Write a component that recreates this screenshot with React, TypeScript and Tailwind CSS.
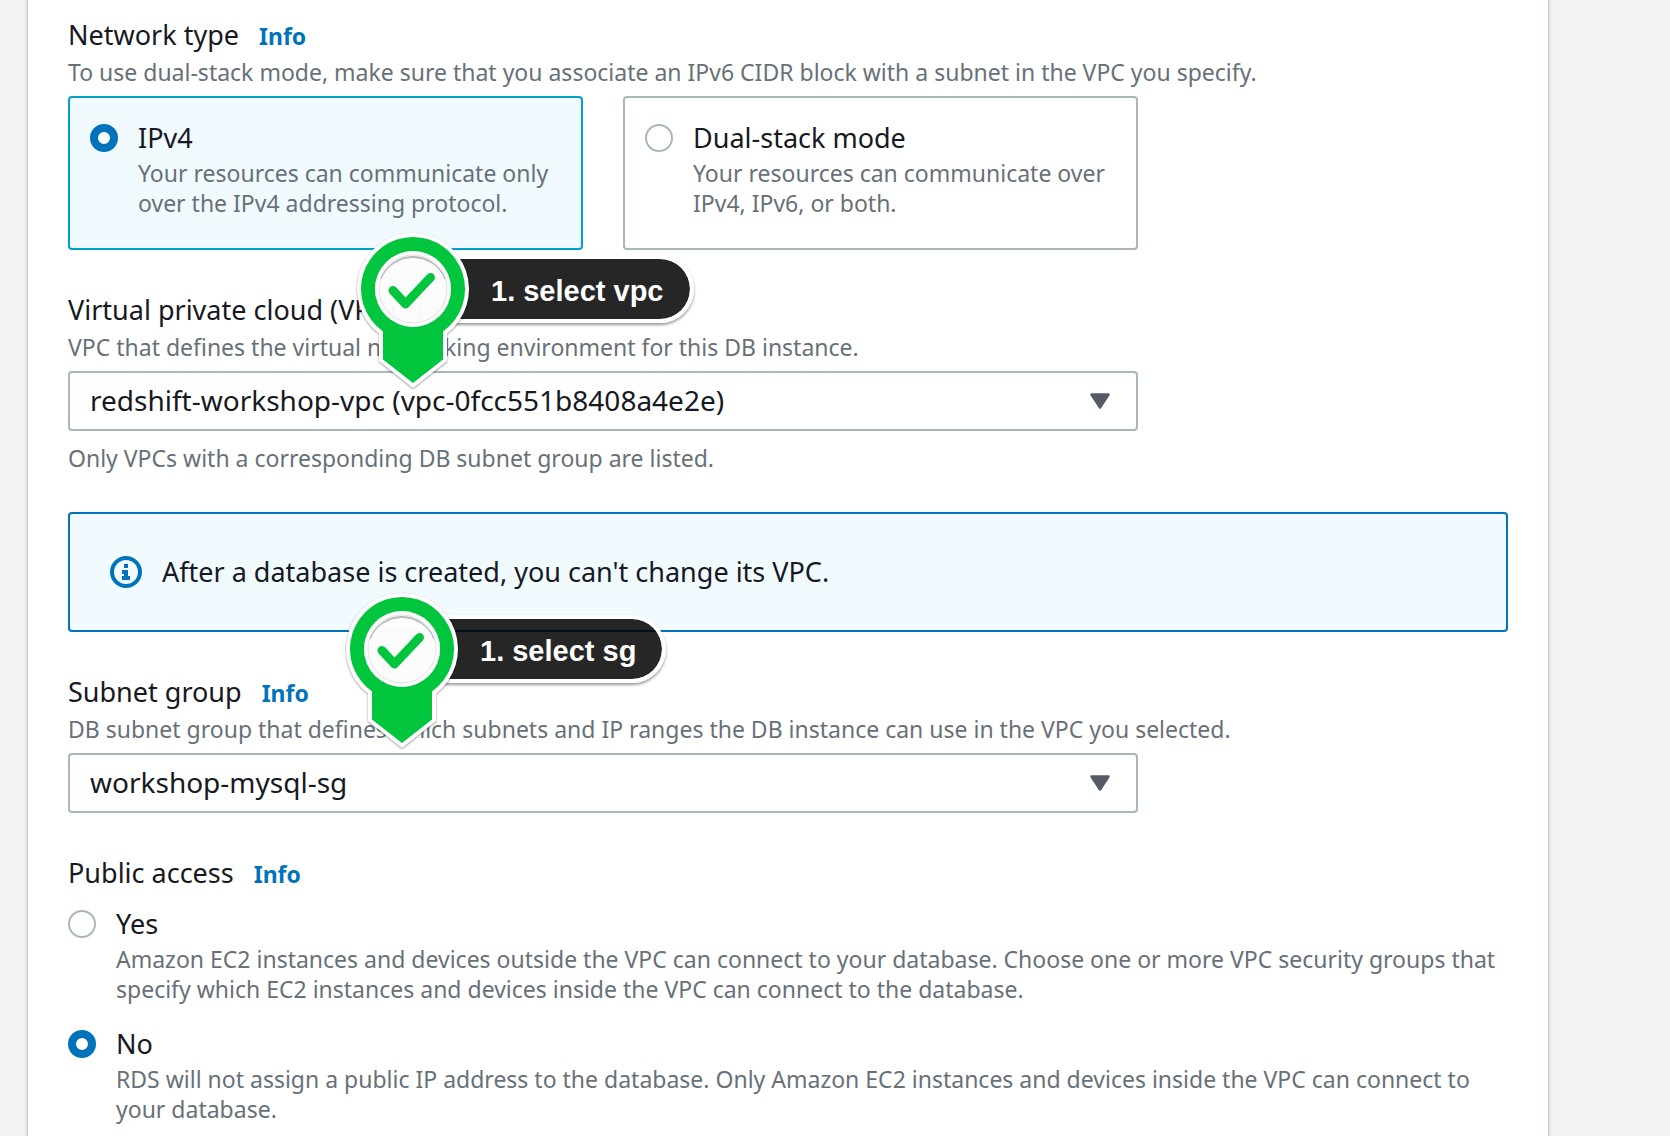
import React, { useId, useState } from "react";

function Marker({ label, className }: { label: string; className: string }) {
  return (
    <div className={`pointer-events-none absolute z-10 flex items-start ${className}`}>
      <svg
        viewBox="0 0 120 164"
        className="relative z-10 h-[164px] w-[120px] shrink-0 drop-shadow-[0_1px_1px_rgba(0,0,0,0.4)]"
        aria-hidden="true"
      >
        <path
          d="M60 4a56 56 0 0 1 34 100.500V132L60 159 26 132V104.500A56 56 0 0 1 60 4Z M60 22a38 38 0 1 0 0 76 38 38 0 0 0 0-76Z"
          fill="#fff"
          fillRule="evenodd"
        />
        <path
          d="M60 8a52 52 0 0 1 30 94.500V130.500L60 154 30 130.500V102.500A52 52 0 0 1 60 8Z M60 22a38 38 0 1 0 0 76 38 38 0 0 0 0-76Z"
          fill="#00c53d"
          fillRule="evenodd"
        />
        <circle cx="60" cy="60" r="38" fill="#fff" fillOpacity="0.97" />
        <circle cx="60" cy="60" r="34" fill="none" stroke="#e2e2e2" strokeWidth="1" />
        <path d="M28 50a34 34 0 0 1 64 0a34.500 34.500 0 0 0-64 0Z" fill="#b4b4b4" stroke="#b9b9b9" strokeWidth="1" />
        <path
          d="M40 61.500 52.500 75 77.500 48.500"
          fill="none"
          stroke="#00c53d"
          strokeWidth="9"
          strokeLinecap="round"
          strokeLinejoin="round"
        />
      </svg>
      <div className="-ml-5 mt-[26px] flex h-[68px] items-center whitespace-nowrap rounded-r-full border-4 border-l-0 border-white bg-black/85 bg-clip-padding pl-[38px] pr-[26px] pt-1 font-['Liberation_Sans',sans-serif] text-[29px] font-bold leading-none text-white shadow-[0_2px_3px_rgba(0,0,0,0.4)]">
        {label}
      </div>
    </div>
  );
}

function FieldTitle({ children, htmlFor }: { children: React.ReactNode; htmlFor?: string }) {
  return (
    <div className="flex items-baseline gap-5 text-[27px] leading-[42px]">
      {htmlFor ? <label htmlFor={htmlFor}>{children}</label> : <span>{children}</span>}
      <a href="#info" className="text-[23px] font-bold text-[#0073bb]">
        Info
      </a>
    </div>
  );
}

function Description({ children }: { children: React.ReactNode }) {
  return <p className="text-[23px] leading-[30px] text-[#687078]">{children}</p>;
}

type OptionProps = {
  name: string;
  title: string;
  text: string;
  checked: boolean;
  onSelect: () => void;
};

function RadioOption({ name, title, text, checked, onSelect }: OptionProps) {
  const id = useId();
  return (
    <div className="flex items-start gap-5">
      <input
        id={id}
        type="radio"
        name={name}
        checked={checked}
        onChange={onSelect}
        className="mt-1.5 size-7 shrink-0 appearance-none rounded-full border-2 border-[#aab7b8] bg-white checked:border-8 checked:border-[#0073bb]"
      />
      <div>
        <label htmlFor={id} className="block text-[27px] leading-10">
          {title}
        </label>
        <Description>{text}</Description>
      </div>
    </div>
  );
}

function Tile(props: OptionProps) {
  return (
    <div
      className={`flex-1 rounded-[4px] border-2 px-5 pb-[30px] pt-5 ${
        props.checked ? "border-[#00a1c9] bg-[#f1faff]" : "border-[#aab7b8] bg-white"
      }`}
    >
      <RadioOption {...props} />
    </div>
  );
}

function Select({ id, option }: { id: string; option: string }) {
  return (
    <div className="relative mt-[9px] max-w-[1070px]">
      <select
        id={id}
        className="block h-[60px] w-full appearance-none rounded-[4px] border-2 border-[#aab7b8] bg-white pb-0.5 pl-5 pr-16 text-[28px] text-[#16191f]"
      >
        <option>{option}</option>
      </select>
      <svg viewBox="0 0 20 16" className="pointer-events-none absolute right-7 top-[22px] h-4 w-5" aria-hidden="true">
        <path d="M1.500 1.500h17L10 14.500Z" fill="#545b64" stroke="#545b64" strokeWidth="2.500" strokeLinejoin="round" />
      </svg>
    </div>
  );
}

export default function App() {
  const [network, setNetwork] = useState("ipv4");
  const [access, setAccess] = useState("no");

  return (
    <div className="min-h-screen bg-[#f2f3f3] pl-7 pr-[122px] font-['Noto_Sans',sans-serif] text-[#16191f]">
      <main className="flex min-h-screen flex-col gap-[39px] bg-white px-10 pb-2 pt-3.5 shadow-[0_0_0_1px_#c4c9cb,0_0_4px_rgba(0,28,36,0.3)]">
        <section>
          <FieldTitle>Network type</FieldTitle>
          <Description>
            To use dual-stack mode, make sure that you associate an IPv6 CIDR block with a subnet in the VPC you specify.
          </Description>
          <div className="mt-[9px] flex max-w-[1070px] gap-10">
            <Tile
              name="network"
              title="IPv4"
              text="Your resources can communicate only over the IPv4 addressing protocol."
              checked={network === "ipv4"}
              onSelect={() => setNetwork("ipv4")}
            />
            <Tile
              name="network"
              title="Dual-stack mode"
              text="Your resources can communicate over IPv4, IPv6, or both."
              checked={network === "dual"}
              onSelect={() => setNetwork("dual")}
            />
          </div>
        </section>

        <section className="relative">
          <FieldTitle htmlFor="vpc">Virtual private cloud (VPC)</FieldTitle>
          <Description>VPC that defines the virtual networking environment for this DB instance.</Description>
          <Select id="vpc" option="redshift-workshop-vpc (vpc-0fcc551b8408a4e2e)" />
          <div className="mt-3">
            <Description>Only VPCs with a corresponding DB subnet group are listed.</Description>
          </div>
          <Marker label="1. select vpc" className="-top-[60px] left-[285px]" />
        </section>

        <div
          role="status"
          className="flex min-h-[120px] items-center gap-5 rounded-[4px] border-2 border-[#0073bb] bg-[#f1faff] px-10 text-[27px]"
        >
          <svg viewBox="0 0 32 32" className="size-8 shrink-0" aria-hidden="true">
            <circle cx="16" cy="16" r="14" fill="none" stroke="#0073bb" strokeWidth="4" />
            <path d="M14 8h4v4h-4zM12 14h6v6h2v4h-8v-4h2v-2h-2z" fill="#0073bb" />
          </svg>
          <p>After a database is created, you can't change its VPC.</p>
        </div>

        <section className="relative">
          <FieldTitle htmlFor="subnet">Subnet group</FieldTitle>
          <Description>
            DB subnet group that defines which subnets and IP ranges the DB instance can use in the VPC you selected.
          </Description>
          <Select id="subnet" option="workshop-mysql-sg" />
          <Marker label="1. select sg" className="-top-[82px] left-[274px]" />
        </section>

        <section>
          <FieldTitle>Public access</FieldTitle>
          <div className="mt-[9px] flex flex-col gap-5">
            <RadioOption
              name="access"
              title="Yes"
              text="Amazon EC2 instances and devices outside the VPC can connect to your database. Choose one or more VPC security groups that specify which EC2 instances and devices inside the VPC can connect to the database."
              checked={access === "yes"}
              onSelect={() => setAccess("yes")}
            />
            <RadioOption
              name="access"
              title="No"
              text="RDS will not assign a public IP address to the database. Only Amazon EC2 instances and devices inside the VPC can connect to your database."
              checked={access === "no"}
              onSelect={() => setAccess("no")}
            />
          </div>
        </section>
      </main>
    </div>
  );
}
